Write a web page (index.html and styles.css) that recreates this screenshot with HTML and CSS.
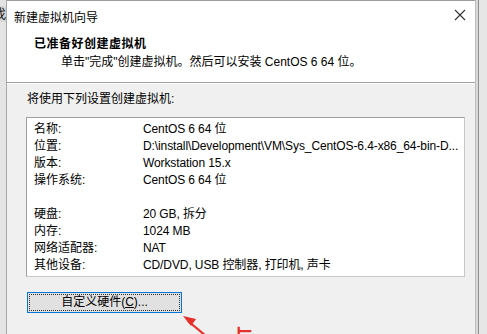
FILE: index.html
```html
<!DOCTYPE html>
<html lang="zh-CN">
<head>
  <meta charset="UTF-8" />
  <title>新建虚拟机向导</title>
  <link rel="stylesheet" href="styles.css">
</head>
<body>
  <div class="side-left"><span>找</span></div>
  <div class="dialog">
    <div class="titlebar">
      <span class="title">新建虚拟机向导</span>
      <svg class="close" width="12" height="12" viewBox="0 0 12 12">
        <path d="M1 1L11 11M11 1L1 11" stroke="#333" stroke-width="1.1" fill="none"/>
      </svg>
    </div>
    <div class="header">
      <div class="heading">已准备好创建虚拟机</div>
      <div class="sub">单击"完成"创建虚拟机。然后可以安装 CentOS 6 64 位。</div>
    </div>
    <div class="content">
      <div class="intro">将使用下列设置创建虚拟机:</div>
      <div class="summary">
        <div class="row"><span class="key">名称:</span><span class="val">CentOS 6 64 位</span></div>
        <div class="row"><span class="key">位置:</span><span class="val">D:\install\Development\VM\Sys_CentOS-6.4-x86_64-bin-D...</span></div>
        <div class="row"><span class="key">版本:</span><span class="val">Workstation 15.x</span></div>
        <div class="row"><span class="key">操作系统:</span><span class="val">CentOS 6 64 位</span></div>
        <div class="row"></div>
        <div class="row"><span class="key">硬盘:</span><span class="val">20 GB, 拆分</span></div>
        <div class="row"><span class="key">内存:</span><span class="val">1024 MB</span></div>
        <div class="row"><span class="key">网络适配器:</span><span class="val">NAT</span></div>
        <div class="row"><span class="key">其他设备:</span><span class="val">CD/DVD, USB 控制器, 打印机, 声卡</span></div>
      </div>
      <button class="custom-btn"><span>自定义硬件(<u>C</u>)...</span></button>
    </div>
  </div>
  <div class="side-right"></div>

  <svg class="arrow" width="60" height="40" viewBox="0 0 60 40">
    <path d="M24 37L6 22" stroke="#e8302a" stroke-width="2.2" fill="none"/>
    <path d="M1 17L14 20L9 27Z" fill="#e8302a"/>
  </svg>
  <div class="mark">点</div>
</body>
</html>
```

FILE: styles.css
```css
body {
  margin: 0;
  width: 487px;
  height: 334px;
  overflow: hidden;
  display: flex;
  position: relative;
  background: #f0f0f0;
  font-family: "Liberation Sans", "Noto Sans CJK SC", sans-serif;
  font-size: 12px;
  color: #000;
}

.side-left {
  width: 7px;
  background: #e4e4e4;
  border-right: 1px solid #a8a8a8;
  overflow: hidden;
  box-sizing: border-box;
}
.side-left span {
  display: block;
  margin: 6px 0 0 -7px;
  font-size: 13px;
  color: #222;
  background: #d8d8d8;
  width: 14px;
  line-height: 16px;
}

.dialog {
  width: 469px;
  display: flex;
  flex-direction: column;
  background: #f0f0f0;
  border-top: 1px solid #9c9c9c;
}

.titlebar {
  height: 29px;
  background: #fff;
  display: flex;
  align-items: center;
  justify-content: space-between;
  padding: 0 9px 0 7px;
}
.title {
  font-size: 12px;
  margin-top: 1px;
}
.close {
  margin-bottom: 2px;
}

.header {
  background: #fff;
  height: 53px;
  box-sizing: border-box;
  padding: 6px 0 0 27px;
  border-bottom: 1px solid #a0a0a0;
  box-shadow: 0 1px 0 #fff;
}
.heading {
  font-weight: bold;
  font-size: 12px;
  letter-spacing: 0.5px;
  line-height: 16px;
}
.sub {
  padding-left: 27px;
  margin-top: 2px;
  line-height: 17px;
}

.content {
  padding: 8px 10px 0 19px;
}
.intro {
  line-height: 16px;
  margin-left: 1px;
}

.summary {
  margin-top: 10px;
  background: #fff;
  border: 1px solid #a0a0a0;
  border-right-color: #c8c8c8;
  border-bottom-color: #c8c8c8;
  padding: 3px 0 2px 7px;
}
.row {
  height: 17px;
  line-height: 17px;
  display: flex;
  white-space: nowrap;
}
.key {
  width: 109px;
}
.val {
  letter-spacing: -0.1px;
}

.custom-btn {
  margin-top: 15px;
  margin-left: 1px;
  width: 155px;
  height: 21px;
  padding: 1px;
  border: 1px solid #0078d7;
  background: #e1e1e1;
  font-family: inherit;
  font-size: 12px;
  color: #000;
  display: flex;
}
.custom-btn span {
  flex: 1;
  border: 1px dotted #333;
  line-height: 15px;
  text-align: center;
}
.custom-btn u {
  text-decoration: underline;
}

.side-right {
  width: 11px;
  background: linear-gradient(to right, #d9d9d9 0 2px, #8e8e8e 2px 3px, #e6e6e6 3px);
  border-left: 1px solid #bdbdbd;
}

.arrow {
  position: absolute;
  left: 182px;
  top: 299px;
}
.mark {
  position: absolute;
  left: 224px;
  top: 324px;
  font-size: 30px;
  line-height: 30px;
  color: #e8302a;
  font-family: "Noto Sans CJK SC", sans-serif;
}
```
